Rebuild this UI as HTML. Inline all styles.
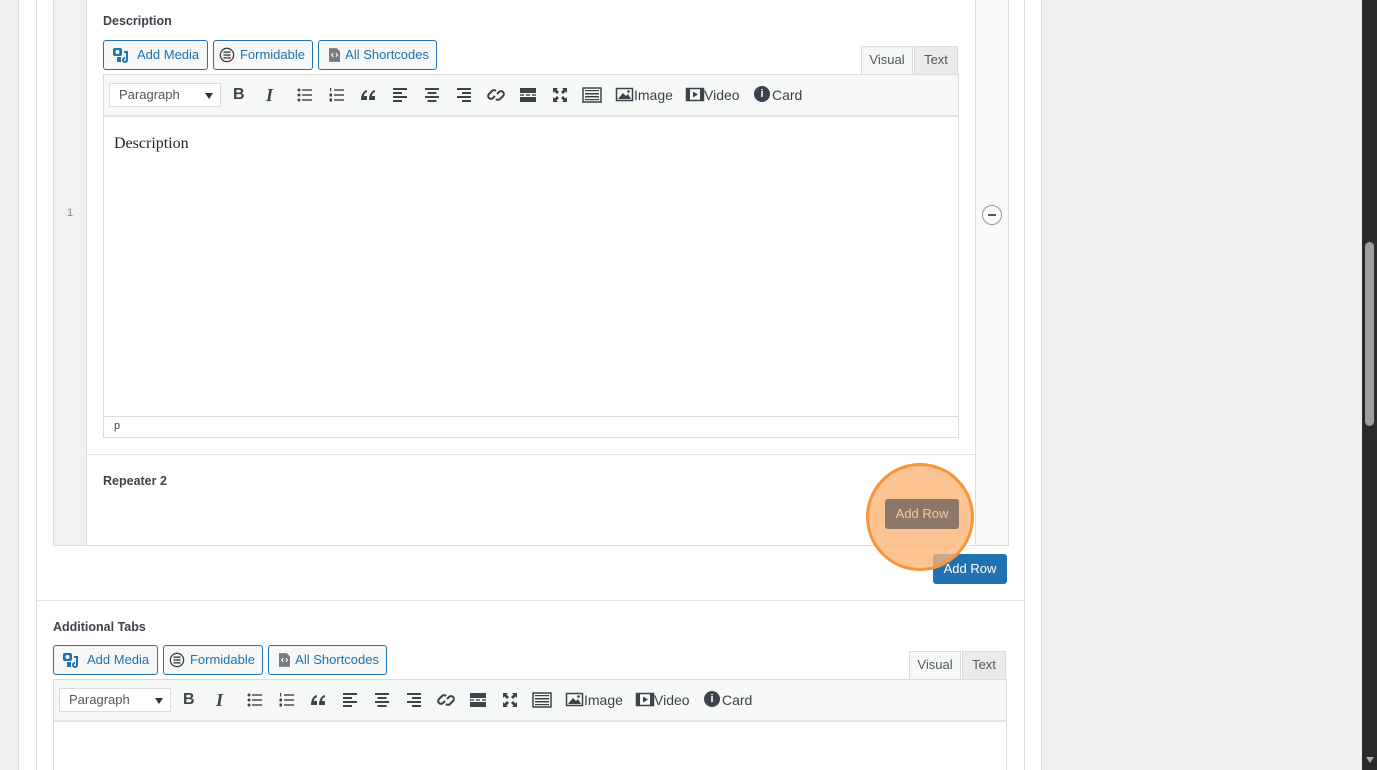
<!DOCTYPE html>
<html><head><meta charset="utf-8"><style>
*{box-sizing:border-box;margin:0;padding:0}
html,body{width:1377px;height:770px;overflow:hidden}
body{background:#f0f0f0;font-family:"Liberation Sans",sans-serif;font-size:13px;color:#1d2327;position:relative}
.a{position:absolute}
.btn{position:absolute;height:30px;border:1px solid #2271b1;border-radius:3px;background:#f6f7f7;color:#2271b1;font-size:13px;line-height:28px;padding:0 7px 0 8px;white-space:nowrap;display:flex;align-items:center;gap:5px}
.tb{position:absolute;background:#f6f7f7;border:1px solid #dcdcde;border-bottom:2px solid #e4e4e4}
.sel{position:absolute;background:#fff;border:1px solid #dcdcde;height:24px;width:112px;font-size:13px;color:#50575e;line-height:22px;padding-left:9px}
.sel:after{content:"";position:absolute;right:7px;top:9px;border:4px solid transparent;border-top:6px solid #333}
.tab{position:absolute;height:29px;border:1px solid #dcdcde;font-size:13px;color:#50575e;line-height:26px;text-align:center}
svg.i{position:absolute;width:20px;height:20px}
.lbl{position:absolute;color:#3c434a;font-size:14px}
</style></head><body>
<div class="a" style="left:18px;top:0;width:1024px;height:770px;background:#fff;border-left:1px solid #dcdcde;border-right:1px solid #dcdcde"></div>
<div class="a" style="left:36px;top:0;width:989px;height:770px;border-left:1px solid #dcdcde;border-right:1px solid #dcdcde"></div>
<div class="a" style="left:1362px;top:0;width:15px;height:770px;background:#2b2b2b"></div>
<div class="a" style="left:1365px;top:242px;width:9px;height:184px;background:#9e9e9e;border-radius:5px"></div>
<div class="a" style="left:1366px;top:757px;border:4px solid transparent;border-top:6px solid #aaa"></div>

<div class="a" style="left:53px;top:-1px;width:956px;height:547px;border:1px solid #dcdcde"></div>
<div class="a" style="left:54px;top:0;width:33px;height:545px;background:#f1f1f1;border-right:1px solid #dcdcde"></div>
<div class="a" style="left:975px;top:0;width:33px;height:545px;background:#f9f9f9;border-left:1px solid #dcdcde"></div>
<div class="a" style="left:67px;top:207px;font-size:11px;color:#888">1</div>
<div class="a" style="left:982px;top:205px;width:20px;height:20px;border:1px solid #999;border-radius:50%"><div class="a" style="left:5px;top:8px;width:8px;height:2px;background:#555"></div></div>
<div class="a" style="left:87px;top:454px;width:888px;height:1px;background:#e5e5e5"></div>
<div class="a" style="left:36px;top:600px;width:988px;height:1px;background:#e5e5e5"></div>

<div class="a" style="left:103px;top:14px;font-weight:bold;font-size:12.5px;color:#3c434a">Description</div>

<svg width="0" height="0" style="position:absolute">
<defs>
<g id="ul" fill="#3c434a"><circle cx="4" cy="5" r="1.5"/><circle cx="4" cy="10" r="1.5"/><circle cx="4" cy="15" r="1.5"/><rect x="7" y="4.3" width="10" height="1.4"/><rect x="7" y="9.3" width="10" height="1.4"/><rect x="7" y="14.3" width="10" height="1.4"/></g>
<g id="ol" fill="#3c434a"><rect x="3" y="3" width="1.2" height="3.5"/><rect x="2.5" y="8.5" width="2.5" height="3" /><rect x="2.5" y="13.5" width="2.5" height="3"/><rect x="7" y="4.3" width="10" height="1.4"/><rect x="7" y="9.3" width="10" height="1.4"/><rect x="7" y="14.3" width="10" height="1.4"/></g>
<g id="bq" fill="#3c434a"><path d="M3 15 C3 10 5 6 9 5 L9 7 C7 8 6 9 6 11 L9 11 L9 15 Z"/><path d="M11 15 C11 10 13 6 17 5 L17 7 C15 8 14 9 14 11 L17 11 L17 15 Z"/></g>
<g id="al" fill="#3c434a"><rect x="3" y="3" width="14" height="2"/><rect x="3" y="7" width="9" height="2"/><rect x="3" y="11" width="14" height="2"/><rect x="3" y="15" width="9" height="2"/></g>
<g id="ac" fill="#3c434a"><rect x="3" y="3" width="14" height="2"/><rect x="5.5" y="7" width="9" height="2"/><rect x="3" y="11" width="14" height="2"/><rect x="5.5" y="15" width="9" height="2"/></g>
<g id="ar" fill="#3c434a"><rect x="3" y="3" width="14" height="2"/><rect x="8" y="7" width="9" height="2"/><rect x="3" y="11" width="14" height="2"/><rect x="8" y="15" width="9" height="2"/></g>
<g id="ln" fill="none" stroke="#3c434a" stroke-width="2"><path d="M9 11 L7 13 A2.8 2.8 0 0 1 3 9 L6 6 A2.8 2.8 0 0 1 10 6"/><path d="M11 9 L13 7 A2.8 2.8 0 0 1 17 11 L14 14 A2.8 2.8 0 0 1 10 14"/></g>
<g id="mo" fill="#3c434a"><rect x="2" y="3" width="16" height="5"/><rect x="2" y="9.3" width="4" height="1.4"/><rect x="8" y="9.3" width="4" height="1.4"/><rect x="14" y="9.3" width="4" height="1.4"/><rect x="2" y="12" width="16" height="5"/></g>
<g id="fs" fill="#3c434a"><path d="M3 3 L8 3 L6.5 4.5 L9 7 L7 9 L4.5 6.5 L3 8Z"/><path d="M17 3 L17 8 L15.5 6.5 L13 9 L11 7 L13.5 4.5 L12 3Z"/><path d="M3 17 L3 12 L4.5 13.5 L7 11 L9 13 L6.5 15.5 L8 17Z"/><path d="M17 17 L12 17 L13.5 15.5 L11 13 L13 11 L15.5 13.5 L17 12Z"/></g>
<g id="kb"><rect x="1" y="3" width="18" height="14" fill="none" stroke="#3c434a" stroke-width="1.5"/><g fill="#3c434a"><rect x="3" y="5" width="14" height="1.2"/><rect x="3" y="8" width="14" height="1.5"/><rect x="3" y="11" width="14" height="1.5"/><rect x="3" y="14" width="14" height="1.2"/></g></g>
<g id="im"><rect x="1.5" y="3.5" width="16" height="12" fill="none" stroke="#3c434a" stroke-width="1.5"/><path d="M3 14 L8 8 L11 11 L13 9 L16 14Z" fill="#3c434a"/><circle cx="13.5" cy="6.5" r="1.3" fill="#3c434a"/></g>
<g id="vd"><rect x="1.5" y="3.5" width="17" height="12" fill="none" stroke="#3c434a" stroke-width="1.5"/><g fill="#3c434a"><rect x="2" y="4" width="3" height="11"/><rect x="15" y="4" width="3" height="11"/><path d="M8 6.5 L13 9.5 L8 12.5Z"/></g></g>
</defs></svg>

<div class="btn" style="left:103px;top:40px;width:105px"><svg width="20" height="18" viewBox="0 0 20 18"><rect x="1" y="2" width="9" height="8" rx="2" fill="#2271b1"/><circle cx="5.5" cy="6" r="2" fill="#fff"/><path d="M12 6 L15 6 L15 14 A2 2 0 1 1 13 12" stroke="#2271b1" stroke-width="2" fill="none"/><rect x="5" y="11" width="4" height="5" fill="#2271b1"/></svg>Add Media</div>
<div class="btn" style="left:213px;top:40px;width:100px;padding-left:5px"><svg width="18" height="18" viewBox="0 0 18 18"><circle cx="9" cy="9" r="7.5" fill="none" stroke="#3c434a" stroke-width="1.5"/><rect x="5" y="5" width="8" height="1.6" fill="#3c434a"/><rect x="5" y="8.2" width="8" height="1.6" fill="#3c434a"/><rect x="5" y="11.4" width="4" height="1.6" fill="#3c434a"/><rect x="9.5" y="11" width="3.5" height="2.5" fill="#d63638"/></svg>Formidable</div>
<div class="btn" style="left:318px;top:40px;width:119px;padding-left:10px"><svg width="13" height="16" viewBox="0 0 13 16"><path d="M0 0 L9 0 L13 4 L13 16 L0 16Z" fill="#787c82"/><path d="M5 6 L3 8 L5 10 M8 6 L10 8 L8 10" stroke="#fff" stroke-width="1.2" fill="none"/></svg>All Shortcodes</div>
<div class="tab" style="left:861px;top:46px;width:52px;background:#f6f7f7;border-bottom-color:#f6f7f7">Visual</div>
<div class="tab" style="left:914px;top:46px;width:44px;background:#ebebeb">Text</div>
<div class="tb" style="left:103px;top:74px;width:856px;height:43px"></div>
<div class="a" style="left:103px;top:116px;width:856px;height:322px;border:1px solid #dcdcde;border-top:none"></div>
<div class="a" style="left:104px;top:416px;width:854px;height:1px;background:#dcdcde"></div>
<div class="a" style="left:114px;top:420px;font-size:11px;color:#3c434a">p</div>
<div class="a" style="left:114px;top:135px;font-family:'Liberation Serif',serif;font-size:16px;color:#1d2327">Description</div>
<div class="sel" style="left:109px;top:83px">Paragraph</div>

<div class="a" style="left:0;top:85px">
<div class="a" style="left:233px;top:1px;font-weight:bold;font-size:16px;color:#3c434a">B</div>
<div class="a" style="left:266px;top:0px;font-style:italic;font-family:'Liberation Serif',serif;font-weight:bold;font-size:18px;color:#3c434a">I</div>
<svg class="i" style="left:295px;top:0" viewBox="0 0 20 20"><use href="#ul"/></svg>
<svg class="i" style="left:327px;top:0" viewBox="0 0 20 20"><use href="#ol"/></svg>
<svg class="i" style="left:358px;top:0" viewBox="0 0 20 20"><use href="#bq"/></svg>
<svg class="i" style="left:390px;top:0" viewBox="0 0 20 20"><use href="#al"/></svg>
<svg class="i" style="left:422px;top:0" viewBox="0 0 20 20"><use href="#ac"/></svg>
<svg class="i" style="left:454px;top:0" viewBox="0 0 20 20"><use href="#ar"/></svg>
<svg class="i" style="left:486px;top:0" viewBox="0 0 20 20"><use href="#ln"/></svg>
<svg class="i" style="left:518px;top:0" viewBox="0 0 20 20"><use href="#mo"/></svg>
<svg class="i" style="left:550px;top:0" viewBox="0 0 20 20"><use href="#fs"/></svg>
<svg class="i" style="left:582px;top:0" viewBox="0 0 20 20"><use href="#kb"/></svg>
<svg class="i" style="left:615px;top:0" viewBox="0 0 20 20"><use href="#im"/></svg><div class="lbl" style="left:634px;top:2px">Image</div>
<svg class="i" style="left:685px;top:0" viewBox="0 0 20 20"><use href="#vd"/></svg><div class="lbl" style="left:704px;top:2px">Video</div>
<div class="a" style="left:754px;top:1px;width:16px;height:16px;border-radius:50%;background:#3c434a;color:#fff;font-size:11px;font-weight:bold;line-height:16px;text-align:center">i</div><div class="lbl" style="left:772px;top:2px">Card</div>
</div>

<div class="a" style="left:103px;top:474px;font-weight:bold;font-size:12.5px;color:#3c434a">Repeater 2</div>

<div class="a" style="left:933px;top:554px;width:74px;height:30px;background:#2271b1;border-radius:3px;color:#fff;font-size:13px;line-height:30px;text-align:center">Add Row</div>
<div class="a" style="left:866px;top:463px;width:108px;height:108px;border-radius:50%;background:rgba(251,180,120,.8);border:3px solid #f7953a"></div>
<div class="a" style="left:885px;top:499px;width:74px;height:30px;background:#8b7868;border-radius:3px;color:#f2c9a2;font-size:13px;line-height:30px;text-align:center">Add Row</div>

<div class="a" style="left:53px;top:620px;font-weight:bold;font-size:12.5px;color:#3c434a">Additional Tabs</div>
<div class="btn" style="left:53px;top:645px;width:105px"><svg width="20" height="18" viewBox="0 0 20 18"><rect x="1" y="2" width="9" height="8" rx="2" fill="#2271b1"/><circle cx="5.5" cy="6" r="2" fill="#fff"/><path d="M12 6 L15 6 L15 14 A2 2 0 1 1 13 12" stroke="#2271b1" stroke-width="2" fill="none"/><rect x="5" y="11" width="4" height="5" fill="#2271b1"/></svg>Add Media</div>
<div class="btn" style="left:163px;top:645px;width:100px;padding-left:5px"><svg width="18" height="18" viewBox="0 0 18 18"><circle cx="9" cy="9" r="7.5" fill="none" stroke="#3c434a" stroke-width="1.5"/><rect x="5" y="5" width="8" height="1.6" fill="#3c434a"/><rect x="5" y="8.2" width="8" height="1.6" fill="#3c434a"/><rect x="5" y="11.4" width="8" height="1.6" fill="#3c434a"/></svg>Formidable</div>
<div class="btn" style="left:268px;top:645px;width:119px;padding-left:10px"><svg width="13" height="16" viewBox="0 0 13 16"><path d="M0 0 L9 0 L13 4 L13 16 L0 16Z" fill="#787c82"/><path d="M5 6 L3 8 L5 10 M8 6 L10 8 L8 10" stroke="#fff" stroke-width="1.2" fill="none"/></svg>All Shortcodes</div>
<div class="tab" style="left:909px;top:651px;width:52px;background:#f6f7f7;border-bottom-color:#f6f7f7">Visual</div>
<div class="tab" style="left:962px;top:651px;width:44px;background:#ebebeb">Text</div>
<div class="tb" style="left:53px;top:679px;width:954px;height:43px"></div>
<div class="a" style="left:53px;top:721px;width:954px;height:60px;border:1px solid #dcdcde;border-top:none"></div>
<div class="sel" style="left:59px;top:688px">Paragraph</div>

<div class="a" style="left:-50px;top:690px">
<div class="a" style="left:233px;top:1px;font-weight:bold;font-size:16px;color:#3c434a">B</div>
<div class="a" style="left:266px;top:0px;font-style:italic;font-family:'Liberation Serif',serif;font-weight:bold;font-size:18px;color:#3c434a">I</div>
<svg class="i" style="left:295px;top:0" viewBox="0 0 20 20"><use href="#ul"/></svg>
<svg class="i" style="left:327px;top:0" viewBox="0 0 20 20"><use href="#ol"/></svg>
<svg class="i" style="left:358px;top:0" viewBox="0 0 20 20"><use href="#bq"/></svg>
<svg class="i" style="left:390px;top:0" viewBox="0 0 20 20"><use href="#al"/></svg>
<svg class="i" style="left:422px;top:0" viewBox="0 0 20 20"><use href="#ac"/></svg>
<svg class="i" style="left:454px;top:0" viewBox="0 0 20 20"><use href="#ar"/></svg>
<svg class="i" style="left:486px;top:0" viewBox="0 0 20 20"><use href="#ln"/></svg>
<svg class="i" style="left:518px;top:0" viewBox="0 0 20 20"><use href="#mo"/></svg>
<svg class="i" style="left:550px;top:0" viewBox="0 0 20 20"><use href="#fs"/></svg>
<svg class="i" style="left:582px;top:0" viewBox="0 0 20 20"><use href="#kb"/></svg>
<svg class="i" style="left:615px;top:0" viewBox="0 0 20 20"><use href="#im"/></svg><div class="lbl" style="left:634px;top:2px">Image</div>
<svg class="i" style="left:685px;top:0" viewBox="0 0 20 20"><use href="#vd"/></svg><div class="lbl" style="left:704px;top:2px">Video</div>
<div class="a" style="left:754px;top:1px;width:16px;height:16px;border-radius:50%;background:#3c434a;color:#fff;font-size:11px;font-weight:bold;line-height:16px;text-align:center">i</div><div class="lbl" style="left:772px;top:2px">Card</div>
</div>
</body></html>
